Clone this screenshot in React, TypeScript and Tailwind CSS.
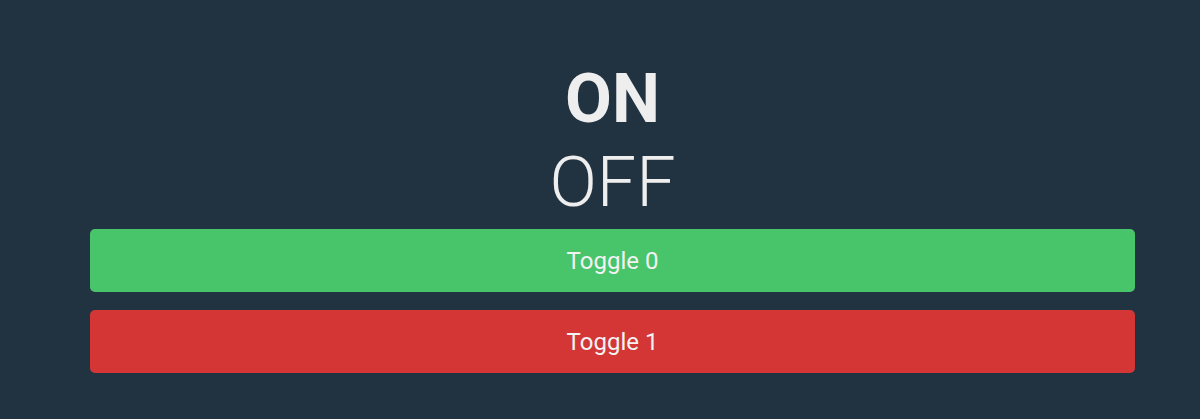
import { useState } from "react";

const App = () => {
  const [states, setStates] = useState<boolean[]>([true, false]);

  const toggle = (i: number) =>
    setStates((prev) => prev.map((s, idx) => (idx === i ? !s : s)));

  return (
    <div className="w-[1200px] h-[419px] bg-[#213240] font-['Roboto',sans-serif] text-[#eeeeee] overflow-hidden">
      <div className="ml-[90px] w-[1045px] pt-[59px] flex flex-col items-center">
        {states.map((s, i) => (
          <div
            key={i}
            className={
              i === 0
                ? "text-[68px] leading-[81px] font-bold"
                : "text-[70px] leading-[85px] font-light"
            }
          >
            {s ? "ON" : "OFF"}
          </div>
        ))}
        <div className="w-full mt-[4px] flex flex-col gap-[18px]">
          {states.map((_, i) => (
            <button
              key={i}
              onClick={() => toggle(i)}
              className={`w-full h-[63px] rounded-[5px] text-[24px] text-[#f2f2f2] flex items-center justify-center ${
                i === 0 ? "bg-[#48c46a]" : "bg-[#d43636]"
              }`}
            >
              Toggle {i}
            </button>
          ))}
        </div>
      </div>
    </div>
  );
};

export default App;
